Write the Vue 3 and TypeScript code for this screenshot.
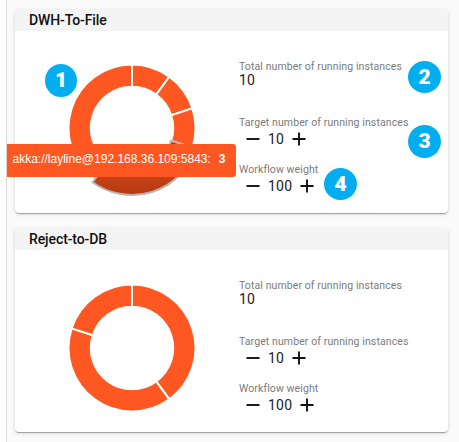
<script setup lang="ts">
interface Workflow {
  name: string
  running: number
  target: number
  weight: number
  slices: number[]
  active: number
}

interface Slice {
  d: string
  active: boolean
}

interface Badge {
  label: string
  x: number
  y: number
  w: number
  h: number
}

const workflows: Workflow[] = [
  { name: 'DWH-To-File', running: 10, target: 10, weight: 100, slices: [1, 1, 1, 3, 4], active: 3 },
  { name: 'Reject-to-DB', running: 10, target: 10, weight: 100, slices: [4, 4, 2], active: -1 },
]

const badges: Badge[] = [
  { label: '1', x: 45, y: 64, w: 32, h: 33 },
  { label: '2', x: 408, y: 61, w: 33, h: 32 },
  { label: '3', x: 408, y: 125, w: 33, h: 33 },
  { label: '4', x: 324, y: 168, w: 33, h: 32 },
]

const CENTER = 70

function point(radius: number, turn: number): string {
  const a = turn * Math.PI * 2
  return `${(CENTER + radius * Math.sin(a)).toFixed(2)} ${(CENTER - radius * Math.cos(a)).toFixed(2)}`
}

function slicesOf(flow: Workflow): Slice[] {
  const total = flow.slices.reduce((sum, v) => sum + v, 0)
  let start = 0
  const result = flow.slices.map((value, i) => {
    const from = start / total
    start += value
    const to = start / total
    const active = i === flow.active
    const outer = active ? 67 : 63.5
    const inner = 41.2
    const large = to - from > 0.5 ? 1 : 0
    const d = `M${point(outer, from)}A${outer} ${outer} 0 ${large} 1 ${point(outer, to)}L${point(inner, to)}A${inner} ${inner} 0 ${large} 0 ${point(inner, from)}Z`
    return { d, active }
  })
  return result.sort((a, b) => Number(a.active) - Number(b.active))
}
</script>

<template>
  <main class="page">
    <section v-for="flow in workflows" :key="flow.name" class="card">
      <h2 class="title">{{ flow.name }}</h2>
      <div class="body">
        <svg class="donut" width="140" height="140" viewBox="0 0 140 140">
          <defs>
            <linearGradient id="active-slice" x1="0" y1="0" x2="0" y2="1">
              <stop offset="0" stop-color="#a83a18" />
              <stop offset="0.5" stop-color="#c84418" />
              <stop offset="1" stop-color="#b83a13" />
            </linearGradient>
          </defs>
          <path
            v-for="slice in slicesOf(flow)"
            :key="slice.d"
            :d="slice.d"
            :class="slice.active ? 'slice active' : 'slice'"
          />
        </svg>
        <div class="info">
          <div class="field total">
            <span class="label">Total number of running instances</span>
            <span class="value">{{ flow.running }}</span>
          </div>
          <div class="field">
            <span class="label">Target number of running instances</span>
            <div class="stepper">
              <svg class="icon" viewBox="0 0 14 14"><path d="M0.5 7H13.5" /></svg>
              <span class="value">{{ flow.target }}</span>
              <svg class="icon" viewBox="0 0 14 14"><path d="M0.5 7H13.5M7 0.5V13.5" /></svg>
            </div>
          </div>
          <div class="field">
            <span class="label">Workflow weight</span>
            <div class="stepper">
              <svg class="icon" viewBox="0 0 14 14"><path d="M0.5 7H13.5" /></svg>
              <span class="value">{{ flow.weight }}</span>
              <svg class="icon" viewBox="0 0 14 14"><path d="M0.5 7H13.5M7 0.5V13.5" /></svg>
            </div>
          </div>
        </div>
      </div>
    </section>
    <div class="tooltip">
      <span class="address">akka://layline@192.168.36.109:5843:</span>
      <b>3</b>
    </div>
    <span
      v-for="b in badges"
      :key="b.label"
      class="badge"
      :style="{ left: b.x + 'px', top: b.y + 'px', width: b.w + 'px', height: b.h + 'px' }"
    >{{ b.label }}</span>
  </main>
</template>

<style>
body {
  background: #fff;
  overflow: hidden;
}
</style>

<style scoped>
.page {
  position: relative;
  box-sizing: border-box;
  height: 442px;
  padding: 10px 11px 0 15px;
  display: flex;
  flex-direction: column;
  gap: 16px;
  background: linear-gradient(90deg, #fff 6px, #d9d9d9 6px, #d9d9d9 7px, #fafafa 7px);
  font-family: Roboto, sans-serif;
}
.card {
  flex: none;
  height: 203px;
  border-radius: 4px;
  background: #fff;
  box-shadow: 0 2px 1px -1px rgba(0, 0, 0, 0.2), 0 1px 1px rgba(0, 0, 0, 0.14), 0 1px 4px rgba(0, 0, 0, 0.14);
}
.title {
  margin: 0;
  height: 21px;
  padding-left: 14px;
  border-radius: 4px 4px 0 0;
  background: #f4f4f4;
  color: #111;
  font-size: 14px;
  font-weight: 500;
  line-height: 21px;
  letter-spacing: -0.1px;
}
.body {
  display: flex;
  align-items: flex-start;
  padding: 27px 0 0 47px;
}
.donut {
  flex: none;
}
.card + .card .donut {
  margin-top: 1px;
}
.info {
  padding: 2px 0 0 37px;
}
.slice {
  fill: #ff5722;
  stroke: #fff;
  stroke-width: 2;
}
.slice.active {
  fill: url(#active-slice);
  stroke: #b8b4b2;
}
.field {
  display: flex;
  flex-direction: column;
  height: 47px;
}
.field.total {
  height: 56px;
}
.label {
  height: 13px;
  color: #7a7a7a;
  font-size: 10.5px;
  line-height: 14px;
  letter-spacing: 0.1px;
  white-space: nowrap;
}
.value {
  color: #1c1c1c;
  font-size: 14px;
  line-height: 15px;
  letter-spacing: 0.2px;
}
.stepper {
  display: flex;
  align-items: center;
  gap: 8px;
  height: 20px;
  padding-left: 7px;
}
.icon {
  width: 14px;
  height: 14px;
  fill: none;
  stroke: #111;
  stroke-width: 1.9;
}
.tooltip {
  position: absolute;
  left: 7px;
  top: 144px;
  box-sizing: border-box;
  width: 229px;
  height: 33px;
  display: flex;
  gap: 8px;
  padding-left: 5.5px;
  border-radius: 0 3px 3px 0;
  background: #ff5722;
  color: #fff;
  font: 12px/31px "Liberation Sans", sans-serif;
  white-space: nowrap;
}
.badge {
  position: absolute;
  border-radius: 50%;
  background: #03aef0;
  color: #fff;
  font-size: 21px;
  font-weight: 900;
  line-height: 32px;
  text-align: center;
}
</style>
